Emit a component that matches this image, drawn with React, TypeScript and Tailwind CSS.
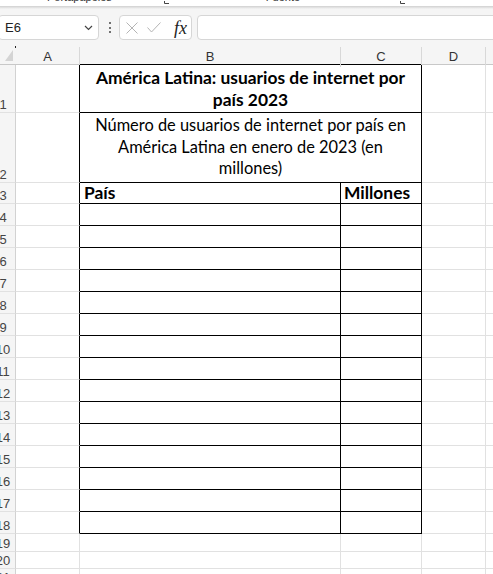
import React from "react"

const lato = { fontFamily: "Lato, 'Liberation Sans', sans-serif" }

function RowHeader({ n }: { n: number }) {
  return (
    <div className="w-[16px] shrink-0 h-full bg-[#f5f5f5] border-r border-b border-r-[#d2d2d2] border-b-[#e1e1e1] overflow-hidden flex items-end pb-[1px]">
      <div className="w-[28px] ml-[-11px] shrink-0 text-center text-[13px] leading-none text-[#444] font-['Liberation_Sans',sans-serif]">
        {n}
      </div>
    </div>
  )
}

/* Rows 4..18: empty table rows */
function TableRow({ n }: { n: number }) {
  return (
    <div className="flex h-[22px]">
      <RowHeader n={n} />
      <div className="w-[64px] shrink-0 border-r border-b border-r-black border-b-[#e1e1e1]" />
      <div className="w-[261px] shrink-0 border-r border-b border-black" />
      <div className="w-[81px] shrink-0 border-r border-b border-black" />
      <div className="w-[64px] shrink-0 border-r border-b border-[#e1e1e1]" />
      <div className="flex-1 border-b border-[#e1e1e1]" />
    </div>
  )
}

function PlainRow({ n, h }: { n: number; h: string }) {
  return (
    <div className={`flex ${h}`}>
      <RowHeader n={n} />
      <div className="w-[64px] shrink-0 border-r border-b border-[#e1e1e1]" />
      <div className="w-[261px] shrink-0 border-r border-b border-[#e1e1e1]" />
      <div className="w-[81px] shrink-0 border-r border-b border-[#e1e1e1]" />
      <div className="w-[64px] shrink-0 border-r border-b border-[#e1e1e1]" />
      <div className="flex-1 border-b border-[#e1e1e1]" />
    </div>
  )
}

function Launcher() {
  return (
    <svg width="6" height="4" viewBox="0 0 6 4" className="shrink-0">
      <path d="M0.5 0 V2.5 H5" stroke="#444" strokeWidth="1" fill="none" />
    </svg>
  )
}

export default function App() {
  const bodyRows = [4, 5, 6, 7, 8, 9, 10, 11, 12, 13, 14, 15, 16, 17, 18]

  return (
    <div className="w-[493px] h-[574px] overflow-hidden bg-white">
      {/* Ribbon bottom edge (group labels cut off) */}
      <div className="h-[6px] overflow-hidden bg-white flex text-[11px] leading-[12px] text-[#333] font-['Liberation_Sans',sans-serif]">
        <div className="ml-[47px] mt-[-9px] whitespace-nowrap">Portapapeles</div>
        <div className="ml-[52px] mt-[1px]"><Launcher /></div>
        <div className="ml-[96px] mt-[-9px] whitespace-nowrap">Fuente</div>
        <div className="ml-[100px] mt-[1px]"><Launcher /></div>
      </div>
      <div className="h-[3px] bg-gradient-to-b from-[#d0d0d0] to-[#f5f5f5]" />

      {/* Formula bar */}
      <div className="bg-[#f5f5f5] pt-[6px] pb-[1px] flex items-center">
        <div className="ml-[-2px] w-[101px] h-[25px] shrink-0 bg-white border border-[#d6d6d6] rounded-[4px] flex items-center pl-[6px] pr-[5px]">
          <span className="text-[13px] text-[#222] font-['Liberation_Sans',sans-serif]">E6</span>
          <svg width="9" height="6" viewBox="0 0 9 6" className="ml-auto">
            <path d="M1 1 L4.5 4.5 L8 1" stroke="#444" strokeWidth="1.2" fill="none" />
          </svg>
        </div>
        <div className="ml-[9px] w-[3px] flex flex-col items-center gap-[2.5px]">
          <div className="w-[2px] h-[2px] bg-[#444] rounded-full" />
          <div className="w-[2px] h-[2px] bg-[#444] rounded-full" />
          <div className="w-[2px] h-[2px] bg-[#444] rounded-full" />
        </div>
        <div className="ml-[8px] w-[73px] h-[25px] shrink-0 bg-white border border-[#d6d6d6] rounded-[4px] flex items-center pl-[6px]">
          <svg width="12" height="12" viewBox="0 0 12 12">
            <path d="M0.5 0.5 L11.5 11.5 M11.5 0.5 L0.5 11.5" stroke="#b4b4b4" strokeWidth="1" />
          </svg>
          <svg width="14" height="11" viewBox="0 0 14 11" className="ml-[9px]">
            <path d="M0.5 5.5 L4.5 10 L13.5 0.5" stroke="#b4b4b4" strokeWidth="1" fill="none" />
          </svg>
          <span className="ml-[13px] text-[18px] leading-none italic text-[#222] font-['Liberation_Serif',serif]">fx</span>
        </div>
        <div className="ml-[5px] flex-1 mr-[-6px] h-[25px] bg-white border border-[#d6d6d6] rounded-[4px]" />
      </div>

      {/* Column headers */}
      <div className="flex h-[24px] bg-[#f5f5f5]">
        <div className="w-[16px] shrink-0 border-b border-[#c8c8c8]">
          <svg width="16" height="23" viewBox="0 0 16 23">
            <rect x="15" y="5" width="1" height="2" fill="#222" />
            <polygon points="13,9 13,20 5,20" fill="#d4d4d4" />
          </svg>
        </div>
        {[
          { l: "A", w: "w-[64px]", b: "border-b-[#c8c8c8]" },
          { l: "B", w: "w-[261px]", b: "border-b-black" },
          { l: "C", w: "w-[81px]", b: "border-b-black" },
          { l: "D", w: "w-[64px]", b: "border-b-[#c8c8c8]" },
        ].map((c) => (
          <div key={c.l} className={`${c.w} shrink-0 flex flex-col border-b ${c.b}`}>
            <div className="mt-[6px] flex-1 border-r border-[#d8d8d8] flex items-center justify-center text-[13px] text-[#333] font-['Liberation_Sans',sans-serif]">
              {c.l}
            </div>
          </div>
        ))}
        <div className="flex-1 border-b border-[#c8c8c8]" />
      </div>

      {/* Row 1: title */}
      <div className="flex h-[48px]">
        <RowHeader n={1} />
        <div className="w-[64px] shrink-0 border-r border-b border-r-black border-b-[#e1e1e1]" />
        <div
          style={lato}
          className="w-[342px] shrink-0 border-r border-b border-black flex flex-col justify-end pb-[1px] text-center text-[17.4px] leading-[22px] font-bold text-black whitespace-nowrap"
        >
          <div>América Latina: usuarios de internet por</div>
          <div>país 2023</div>
        </div>
        <div className="w-[64px] shrink-0 border-r border-b border-[#e1e1e1]" />
        <div className="flex-1 border-b border-[#e1e1e1]" />
      </div>

      {/* Row 2: subtitle */}
      <div className="flex h-[70px]">
        <RowHeader n={2} />
        <div className="w-[64px] shrink-0 border-r border-b border-r-black border-b-[#e1e1e1]" />
        <div
          style={lato}
          className="w-[342px] shrink-0 border-r border-b border-black pt-[1px] text-center text-[16.4px] leading-[21.5px] text-black whitespace-nowrap"
        >
          <div>Número de usuarios de internet por país en</div>
          <div>América Latina en enero de 2023 (en</div>
          <div>millones)</div>
        </div>
        <div className="w-[64px] shrink-0 border-r border-b border-[#e1e1e1]" />
        <div className="flex-1 border-b border-[#e1e1e1]" />
      </div>

      {/* Row 3: column titles */}
      <div className="flex h-[21px]">
        <RowHeader n={3} />
        <div className="w-[64px] shrink-0 border-r border-b border-r-black border-b-[#e1e1e1]" />
        <div style={lato} className="w-[261px] shrink-0 border-r border-b border-black flex items-end pb-[1px] pl-[4px] text-[17.4px] leading-[19px] font-bold text-black">
          País
        </div>
        <div style={lato} className="w-[81px] shrink-0 border-r border-b border-black flex items-end pb-[1px] pl-[3px] text-[17.4px] leading-[19px] font-bold text-black whitespace-nowrap">
          Millones
        </div>
        <div className="w-[64px] shrink-0 border-r border-b border-[#e1e1e1]" />
        <div className="flex-1 border-b border-[#e1e1e1]" />
      </div>

      {bodyRows.map((n) => (
        <TableRow key={n} n={n} />
      ))}

      <PlainRow n={19} h="h-[18px]" />
      <PlainRow n={20} h="h-[17px]" />
      <PlainRow n={21} h="h-[17px]" />
    </div>
  )
}
